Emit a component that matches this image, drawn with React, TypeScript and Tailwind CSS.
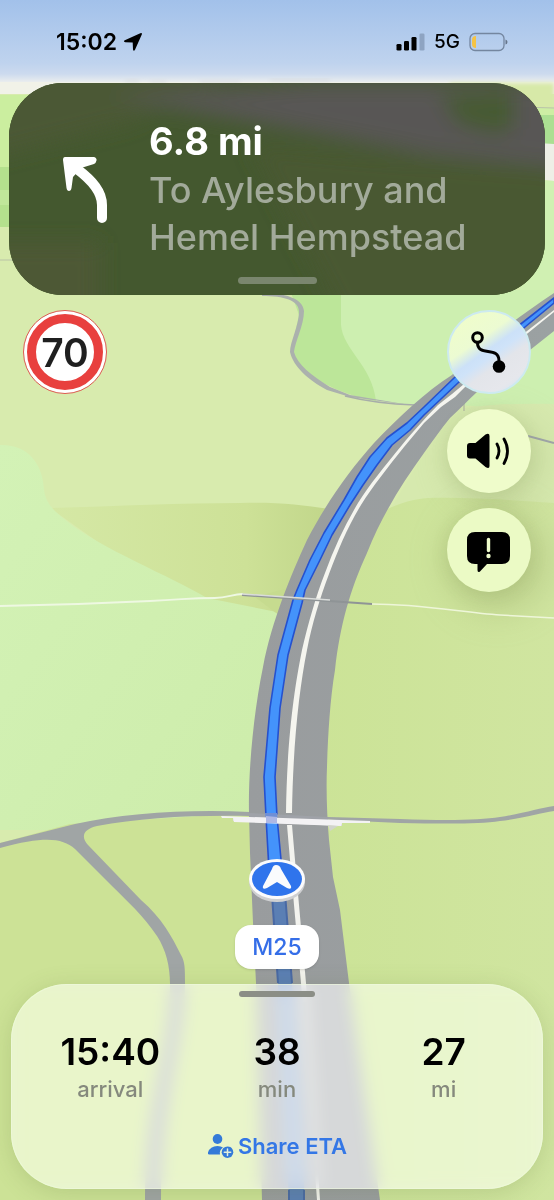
import type { ReactNode } from 'react';

const stats = [
  { value: '15:40', label: 'arrival' },
  { value: '38', label: 'min' },
  { value: '27', label: 'mi' },
];

function MapCanvas() {
  return (
    <svg
      className="absolute inset-0 h-full w-full"
      viewBox="0 0 554 1200"
      preserveAspectRatio="xMidYMid slice"
      aria-hidden="true"
    >
      <defs>
        <linearGradient id="sky" x1="0" y1="0" x2="0" y2="1">
          <stop offset="0" stopColor="#a2c1ea" />
          <stop offset="0.75" stopColor="#bfd3ee" />
          <stop offset="0.88" stopColor="#ccdaee" />
          <stop offset="1" stopColor="#f1f2ee" />
        </linearGradient>
        <linearGradient id="meadow" x1="0" y1="0" x2="1" y2="1">
          <stop offset="0" stopColor="#d3f2b6" />
          <stop offset="1" stopColor="#cdecaa" />
        </linearGradient>
        <linearGradient id="slope" x1="0" y1="0" x2="1" y2="0">
          <stop offset="0" stopColor="#d5e8a5" />
          <stop offset="0.7" stopColor="#cde197" />
          <stop offset="1" stopColor="#c1d68a" />
        </linearGradient>
        <linearGradient id="pasture" x1="0" y1="0" x2="1" y2="0">
          <stop offset="0" stopColor="#cbe396" />
          <stop offset="1" stopColor="#d0e5a0" />
        </linearGradient>
        <linearGradient id="tarmac" x1="0" y1="0" x2="1" y2="0">
          <stop offset="0" stopColor="#999c9e" />
          <stop offset="1" stopColor="#9ba1a2" />
        </linearGradient>
        <linearGradient id="travelled" gradientUnits="userSpaceOnUse" x1="0" y1="880" x2="0" y2="1200">
          <stop offset="0.32" stopColor="#5b7fb4" />
          <stop offset="0.38" stopColor="#8ba6c8" />
          <stop offset="0.92" stopColor="#8ba6c8" />
          <stop offset="0.97" stopColor="#5b7fb4" />
        </linearGradient>
        <filter id="shade" x="-50%" y="-50%" width="200%" height="200%">
          <feGaussianBlur stdDeviation="18" />
        </filter>
        <filter id="haze" x="-10%" y="-100%" width="120%" height="300%">
          <feGaussianBlur stdDeviation="2" />
        </filter>
      </defs>

      {/* ground */}
      <rect width="554" height="1200" fill="#d8ebae" />
      <rect width="554" height="84" fill="url(#sky)" />

      {/* horizon */}
      <rect y="82" width="554" height="12" fill="#f1f2e8" />
      <rect x="450" y="83" width="104" height="40" fill="#d7e9a8" filter="url(#haze)" />
      <path d="M125 81h14M150 82h16M200 82h40M270 80h60" stroke="#d6d9dd" strokeWidth="2" filter="url(#haze)" />
      <rect y="95" width="60" height="74" fill="#cbee9f" />
      <rect y="167" width="60" height="60" fill="#b4e18d" />
      <rect y="190" width="60" height="15" fill="#c0e79a" />
      <path d="M0 260h30" stroke="#b9c4a6" strokeWidth="1" />
      <path d="M520 107L554 108V146L520 140Z" fill="#cdeea4" />
      <path d="M520 115H554V146L520 140Z" fill="#abdf92" />
      <path d="M520 107l34 1" stroke="#b9c2a9" />
      <path d="M520 142L554 144V181L520 178Z" fill="#eeefe6" />
      <path d="M520 179L554 181V300H520Z" fill="#d0f0b2" />

      {/* far fields */}
      <path d="M298 290H554V420C500 408 460 402 410 405C376 401 330 395 300 360Z" fill="#cdefb0" />
      <path d="M290 290H341V325C343 350 372 365 376 401C340 395 300 375 291 352L299 315Z" fill="#bce699" />
      <path d="M450 410C490 404 520 403 554 404V510H390Z" fill="#d6e9ae" />
      <path d="M50 508C120 506 180 503 240 503C280 502 300 505 330 509V640H262L207 598L140 572Z" fill="url(#slope)" />
      <path d="M360 524C385 508 408 499 428 498C470 497 510 500 554 503V1200H300V640Z" fill="url(#pasture)" />
      <path d="M0 445C28 444 43 464 44 490C46 504 54 511 68 522C100 548 170 576 207 598L277 612V830H0Z" fill="url(#meadow)" />
      <path d="M255 597L288 588V618L276 613Z" fill="#c6db8f" />
      <path d="M0 843L70 824L250 813L280 830V1200H0Z" fill="#cce296" />
      <ellipse cx="497" cy="560" rx="52" ry="52" fill="#94a564" opacity="0.35" filter="url(#shade)" />
      <ellipse cx="497" cy="460" rx="50" ry="44" fill="#a4b578" opacity="0.3" filter="url(#shade)" />

      {/* minor roads */}
      <path d="M262 296C284 296 299 300 299 312C299 325 290 342 290 352C293 366 308 380 327 390L350 397L410 405V405L350 395L330 387C312 376 297 364 294 352C295 342 304 325 304 311C303 298 284 293 262 293Z" fill="#abb1ad" />
      <path d="M345 396C365 401 385 404 415 405" fill="none" stroke="#a7ada9" strokeWidth="1.5" />
      <path d="M528 436L554 443" stroke="#9da3a5" strokeWidth="2" />
      <path d="M464 402v9" stroke="#a7aa9d" strokeWidth="1" />
      <path d="M0 606C60 605 110 603 150 601S190 598 215 598C228 598 232 594 243 594" fill="none" stroke="#eef8e2" strokeWidth="1.8" />
      <path d="M372 604C420 604 460 612 500 615L554 618" fill="none" stroke="#eef6d9" strokeWidth="1.6" />
      <path d="M0 843C25 837 50 830 75 824C125 813 190 809 250 812L328 817L400 819C450 821 480 820 500 817C525 813 540 808 554 806V811C540 813 525 818 500 821C480 824 450 824 400 823L250 816C190 815 140 818 97 826C84 829 80 836 88 845L141 900C162 918 172 937 181 955C185 962 185 968 185 984C185 1040 161 1100 161 1200H145C145 1100 170 1050 170 984C170 966 166 950 157 936C143 915 127 901 112 886L75 849C62 838 45 836 0 848Z" fill="#a0a5a5" />

      {/* motorway */}
      <path
        d="M554 293C515 319 485 342 452 375C425 392 398 418 374 443C350 470 328 500 307 540C291 575 272 620 263 667C254 710 248 770 249 813L250 853L253 923L256 983L262 1200H380L349 983L340 910L333 877L329 840C327 815 326 790 327 767C328 735 330 700 335 670C340 625 350 590 367 553C382 515 403 482 424 453C432 442 440 430 450 418C460 409 468 400 477 392L554 331Z"
        fill="url(#tarmac)"
      />
      <path
        d="M554 310L527 331L464 384L452 394L438 405C425 418 412 433 402 445C384 467 370 484 358 503C345 525 334 548 325 573C316 596 308 624 302 650C294 690 287 740 286 813H292C293 745 299 690 307 650C312 624 320 598 329 574C338 550 348 526 361 505C373 486 388 467 404 447L424 423L441 407L455 397L466 386L528 333L554 312Z"
        fill="#f5f5ef"
      />
      <path d="M287 825H292L295 860L299 905L306 983L320 1200H317L301 983L294 905L290 860Z" fill="#f3f3ee" />

      {/* travelled and upcoming route */}
      <path d="M271 880H284L292 983L305 1200H289L278 983Z" fill="url(#travelled)" />
      <path d="M271 880L278 983M284 880L292 983M289 1190V1200M304 1190V1200" stroke="#4969a5" strokeWidth="2" />
      <path
        d="M554 298L522 323L454 378L424 407L407 423L387 438L370 457L357 477L344 500L324 533L310 560L297 590L293 600L278 655L270 708L264 777L266 817L269 870H282L277 817L275 777L280 708L288 655L302 603L305 590L319 562L332 535L350 505L363 485L377 465L392 445L410 430L424 415L459 382L525 327L554 303Z"
        fill="#4493fb"
        stroke="#2551cf"
        strokeWidth="1.6"
        strokeLinejoin="round"
      />

      {/* bridges */}
      <path d="M242 595L372 604" stroke="#8f9496" strokeWidth="2" />
      <path d="M242 594L330 600" stroke="#d9dcda" strokeWidth="1.5" />
      <path d="M249 813L328 817V822L249 818Z" fill="#9fa2a8" />
      <path d="M265 813H277L278 823H266Z" fill="#6f8fd6" />
      <path d="M233 819L342 823V826L233 821Z" fill="#d8d8dc" />
      <path d="M221 816L370 821V823L342 823L341 826L234 822L233 818L222 818Z" fill="#f3f2f4" />
      <path d="M328 825L338 826L330 831Z" fill="#d1d4cc" />
      <path d="M266 816L277 817V823L266 823Z" fill="#aeb8e4" />

      {/* current position */}
      <ellipse cx="277" cy="882" rx="28" ry="20" fill="#cfd0d2" />
      <ellipse cx="277" cy="879" rx="28" ry="20" fill="#fbfbfc" />
      <ellipse cx="277" cy="879" rx="25" ry="17" fill="#2f74ec" />
      <path d="M276 865Q273 865 272 869L263 886Q262 890 267 888L277 882L287 888Q292 890 291 886L281 869Q280 865 276 865Z" fill="#fafbfd" />
    </svg>
  );
}

function StatusBar() {
  return (
    <header className="flex h-[83px] items-center justify-between pr-[46px] pl-14 text-black">
      <div className="flex items-center gap-[6px]">
        <time className="text-[23px] leading-6 font-semibold">15:02</time>
        <svg className="h-5 w-5" viewBox="0 0 20 20" aria-label="Location in use">
          <path d="M17.300 1.200Q19.400 0.400 18.800 2.500L12 17.800Q10.700 19.800 10 17.500L9.700 10.600L2.300 10.300Q-.2 9.600 1.800 8.200Z" fill="black" />
        </svg>
      </div>
      <div className="flex items-center gap-[9px]">
        <svg className="h-[18px] w-[29px]" viewBox="0 0 29 18" aria-label="Signal">
          <rect x="0.500" y="11" width="5" height="6.500" rx="1.300" />
          <rect x="8" y="8" width="5" height="9.500" rx="1.300" />
          <rect x="15.500" y="4" width="5" height="13.500" rx="1.300" />
          <rect x="23.500" y="0.500" width="5" height="17" rx="1.300" fill="#8ea4c2" />
        </svg>
        <span className="text-[19px] leading-6 font-medium">5G</span>
        <svg className="h-5 w-[39px]" viewBox="0 0 39 20" aria-label="Battery low">
          <rect x="1" y="1.500" width="34" height="17" rx="5" fill="none" stroke="#74869f" strokeWidth="1.300" />
          <path d="M7 4V16Q3 16 3 12V8Q3 4 7 4Z" fill="#f5c344" />
          <path d="M36.500 7.500Q38.500 8 38.500 10T36.500 12.500Z" fill="#66758a" />
        </svg>
      </div>
    </header>
  );
}

function TurnCard() {
  return (
    <section className="relative mx-[9px] overflow-hidden rounded-[54px] bg-[#44582f] pb-[11px] ring-1 ring-[#41582c]/70 ring-inset">
      <svg className="absolute inset-0 h-full w-full" viewBox="0 0 536 212" preserveAspectRatio="none" aria-hidden="true">
        <defs>
          <filter id="frost" x="-20%" y="-40%" width="140%" height="180%">
            <feGaussianBlur stdDeviation="10" />
          </filter>
        </defs>
        <g filter="url(#frost)">
          <path d="M-40 -20H250L120 40L0 70L-40 80Z" fill="#4b5835" />
          <path d="M-40 160H90V240H-40Z" fill="#4d5834" />
          <path d="M240 60L580 90V250H340Z" fill="#4a5933" />
          <path d="M100 14L300 0H580V88L420 72L260 42Z" fill="#585655" />
          <path d="M430 12L505 8V44L490 52L450 42Z" fill="#465a31" />
        </g>
      </svg>
      <div className="relative flex items-start pt-8 pl-[51px]">
        <svg className="mt-[39px] h-[72px] w-[50px] shrink-0" viewBox="60 154 50 72" aria-label="Bear left">
          <path d="M77 169C93 181 102 192 102 205V218" fill="none" stroke="white" strokeWidth="10" strokeLinecap="round" />
          <path d="M65 157H94Q97 158 96.500 160.500T94 164L81 168L73 177L71.500 188Q71 191 69 191T66.500 188L63 160Q63 157 65 157Z" fill="white" />
        </svg>
        <div className="ml-[39px]">
          <h1 className="text-[38px] leading-[52px] font-bold text-white">6.8 mi</h1>
          <p className="text-4xl leading-[47px] font-medium text-[#a2aa9a]">
            To Aylesbury and
            <br />
            Hemel Hempstead
          </p>
        </div>
      </div>
      <div className="relative mx-auto mt-4 h-[7px] w-[79px] rounded-full bg-[#7a866e]" />
    </section>
  );
}

function SpeedLimit() {
  return (
    <div
      className="grid size-[84px] place-items-center rounded-full border border-[#dc5b50] bg-white p-[3px]"
      role="img"
      aria-label="Speed limit 70"
    >
      <div className="grid size-full place-items-center rounded-full border-9 border-[#e8403e] bg-white text-[39px] leading-none font-semibold text-[#1f1f1f]">
        70
      </div>
    </div>
  );
}

function MapButton({ label, className, children }: { label: string; className: string; children: ReactNode }) {
  return (
    <button type="button" aria-label={label} className={`grid size-[84px] place-items-center rounded-full ${className}`}>
      <svg className="size-[52px]" viewBox="0 0 52 52" aria-hidden="true">
        {children}
      </svg>
    </button>
  );
}

function MapControls() {
  return (
    <div className="flex flex-col gap-[15px]">
      <MapButton
        label="Route overview"
        className="border-2 border-[#cdeaf0] bg-[linear-gradient(145deg,#effdcb_12%,#ecfbd2_36%,#cce1f8_48%,#cfe3f9_54%,#e3e5ea_64%,#e6e7ec_82%,#cfe4f8_98%)]"
      >
        <circle cx="14.500" cy="11.500" r="4.800" fill="none" stroke="black" strokeWidth="3" />
        <path d="M14.500 16C14 32 36 19 36 35" fill="none" stroke="black" strokeWidth="3" />
        <circle cx="36" cy="40.500" r="6.300" />
      </MapButton>
      <MapButton label="Volume" className="bg-[#effccb] shadow-[0_4px_18px_rgba(90,110,50,0.12)]">
        <path d="M7 18H12.500L22.500 9.500Q26.500 7.500 26.500 11V41Q26.500 44.500 22.500 42L12.500 33.500H7Q4 33.500 4 30.500V21Q4 18 7 18Z" />
        <path d="M34 19Q38 26 34 33M41 14Q48 26 41 38.500" fill="none" stroke="black" strokeWidth="2.800" strokeLinecap="round" />
      </MapButton>
      <MapButton label="Report an incident" className="bg-[#ebfac5] shadow-[0_4px_18px_rgba(90,110,50,0.12)]">
        <path d="M12 8H39Q47 8 47 16V32Q47 40 39 40H24L17 47.500Q14.500 49 14.500 46V40H12Q4 40 4 32V16Q4 8 12 8Z" />
        <path d="M25.500 15.500V26.500" stroke="#effccb" strokeWidth="3.400" strokeLinecap="round" />
        <circle cx="25.500" cy="32" r="2.200" fill="#effccb" />
      </MapButton>
    </div>
  );
}

function TripCard() {
  return (
    <section className="mx-[11px] mb-[11px] rounded-[56px] bg-white/60 px-4 pt-[7px] pb-[27px] shadow-[0_4px_24px_rgba(90,110,50,0.2)] ring-1 ring-[#effade]/60 backdrop-blur-[8px] backdrop-saturate-[1.4] ring-inset">
      <div className="mx-auto h-[6px] w-[76px] rounded-full bg-[#8b8e86]" />
      <dl className="mt-[33px] grid grid-cols-3 text-center">
        {stats.map((s) => (
          <div key={s.label} className="flex flex-col-reverse">
            <dt className="text-[22px] leading-[30px] font-medium text-[#85897d]">{s.label}</dt>
            <dd className="text-[37px] leading-[44px] font-semibold text-black">{s.value}</dd>
          </div>
        ))}
      </dl>
      <button type="button" className="mx-auto mt-[26px] flex items-center gap-1 text-[22px] leading-8 font-semibold text-[#3477e6]">
        <svg className="h-6 w-[27px]" viewBox="0 0 27 24" fill="#347ad8" aria-hidden="true">
          <ellipse cx="10.500" cy="5" rx="4.800" ry="5" />
          <path d="M2 20.500Q.5 20.500 1 18.500Q3 12 10.500 12Q14 12 16 13.500Q12 16.500 13 20.500Z" />
          <circle cx="20.500" cy="18.200" r="5.800" />
          <path d="M20.500 15V21.400M17.300 18.200H23.700" stroke="#e4f0dc" strokeWidth="1.500" strokeLinecap="round" />
        </svg>
        Share ETA
      </button>
    </section>
  );
}

export default function App() {
  return (
    <main className="relative isolate flex min-h-screen flex-col overflow-hidden font-['Inter',sans-serif]">
      <MapCanvas />
      <div className="relative flex flex-1 flex-col">
        <StatusBar />
        <TurnCard />
        <div className="mt-[15px] flex items-start justify-between px-[23px]">
          <SpeedLimit />
          <MapControls />
        </div>
        <div className="mt-auto mb-[15px] self-center rounded-2xl bg-white px-[17px] py-2 text-[23px] leading-7 font-medium text-[#356ee8] shadow-sm">
          M25
        </div>
        <TripCard />
      </div>
    </main>
  );
}
